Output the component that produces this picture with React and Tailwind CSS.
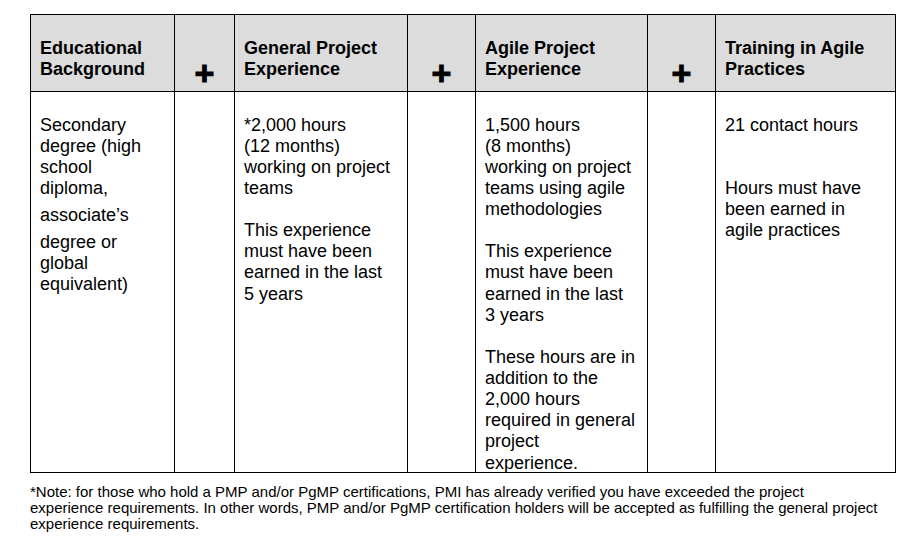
export default function App() {
  const font = { fontFamily: '"Liberation Sans", Arial, sans-serif' };
  const head = "border-l border-t border-black bg-[#dcdcdc] h-[77px] flex flex-col justify-end pb-[11px] pl-[9px] text-[18px] leading-[21px] font-bold text-black";
  const plus = "border-l border-t border-black bg-[#dcdcdc] h-[77px] flex items-end justify-center pb-[1px] text-[34px] leading-[34px] font-bold text-black [-webkit-text-stroke:1px_black]";
  const body = "border-l border-t border-black h-[381px] pt-[22.5px] pl-[9px] text-[18px] leading-[21.125px] text-black whitespace-nowrap";
  const empty = "border-l border-t border-black h-[381px]";
  return (
    <div className="w-[905px] h-[553px] bg-white overflow-hidden pt-[14px]" style={font}>
      <div className="ml-[30px] w-[866px] border-r border-b border-black grid grid-cols-[144px_60px_173px_68px_172px_68px_180px]">
        <div className={head}><div>Educational</div><div>Background</div></div>
        <div className={plus}>+</div>
        <div className={head}><div>General Project</div><div>Experience</div></div>
        <div className={plus}>+</div>
        <div className={head}><div>Agile Project</div><div>Experience</div></div>
        <div className={plus}>+</div>
        <div className={head}><div>Training in Agile</div><div>Practices</div></div>

        <div className={body}>
          <div>Secondary<br />degree (high<br />school<br />diploma,</div>
          <div className="mt-[6px]">associate’s</div>
          <div className="mt-[6px]">degree or<br />global<br />equivalent)</div>
        </div>
        <div className={empty}></div>
        <div className={body}>
          <div>*2,000 hours<br />(12 months)<br />working on project<br />teams</div>
          <div className="mt-[21.125px]">This experience<br />must have been<br />earned in the last<br />5 years</div>
        </div>
        <div className={empty}></div>
        <div className={body}>
          <div>1,500 hours<br />(8 months)<br />working on project<br />teams using agile<br />methodologies</div>
          <div className="mt-[21.125px]">This experience<br />must have been<br />earned in the last<br />3 years</div>
          <div className="mt-[21.125px]">These hours are in<br />addition to the<br />2,000 hours<br />required in general<br />project<br />experience.</div>
        </div>
        <div className={empty}></div>
        <div className={body}>
          <div>21 contact hours</div>
          <div className="mt-[42.25px]">Hours must have<br />been earned in<br />agile practices</div>
        </div>
      </div>
      <div className="ml-[30px] mt-[11px] text-[15px] leading-[16px] text-black whitespace-nowrap">
        *Note: for those who hold a PMP and/or PgMP certifications, PMI has already verified you have exceeded the project<br />
        experience requirements. In other words, PMP and/or PgMP certification holders will be accepted as fulfilling the general project<br />
        experience requirements.
      </div>
    </div>
  );
}
